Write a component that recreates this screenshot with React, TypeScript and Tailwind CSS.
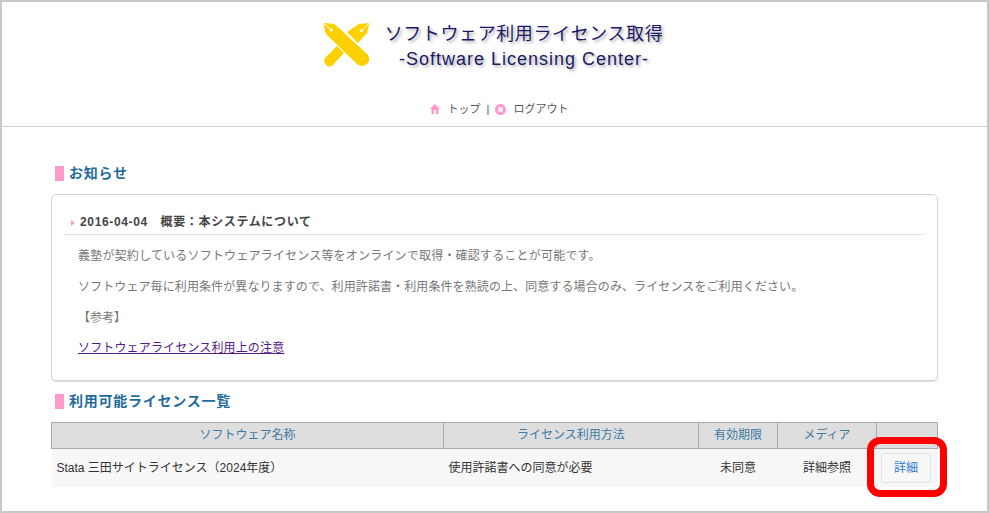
const jp = "font-['Liberation_Sans','Noto_Sans_CJK_JP',sans-serif]";

function Logo() {
  return (
    <svg width="46" height="46" viewBox="0 0 46 46" className="shrink-0">
      <g fill="#ffd000">
        <path d="M45.500 1 L35 2 L23 10 L34 21 L43 11 Z" />
        <path d="M13 24 L1 36 Q-1 40 2 43 Q6 46 9 43 L20 31 Z" />
        <path d="M0 1 L10 2 L15 6 L44 33 Q47 38 43 42 Q38 46 33 42 L3 13 L1 10 Z" />
      </g>
      <path d="M1 2 L7 8 M45 1.500 L38 8" stroke="#fff" strokeWidth="1" />
      <circle cx="7.500" cy="8" r="1.600" fill="#fff" />
      <circle cx="37.500" cy="8.500" r="1.600" fill="#fff" />
    </svg>
  );
}

function SectionTitle({ children }: { children: string }) {
  return (
    <h2 className="flex items-center gap-[5px] h-[15px] text-[14px] leading-[15px] font-bold tracking-[0.75px] text-[#1f6a9e]">
      <span className="w-[9px] h-[15px] bg-[#ff99cc]" />
      {children}
    </h2>
  );
}

export default function App() {
  return (
    <div className={`${jp} relative w-[989px] h-[513px] overflow-hidden bg-white border-2 border-[#c8c8c8] text-[#333]`}>
      <header className="h-[125px] border-b border-[#cfcfcf] flex flex-col items-center">
        <div className="flex items-start mt-[20px] ml-[-2px]">
          <Logo />
          <div className="ml-[15px] text-center text-[18px] leading-[25px] tracking-[0.6px] text-[#1c1a66] [text-shadow:2px_2px_3px_#aaa]">
            <div>ソフトウェア利用ライセンス取得</div>
            <div className="tracking-[1px]">-Software Licensing Center-</div>
          </div>
        </div>
        <nav className="flex items-center mt-[30px] text-[11px] leading-[14px] text-[#555] ml-[9px]">
          <svg width="10" height="10" viewBox="0 0 10 10" className="mr-[8px]">
            <path d="M5 0 L10 5 H8.500 V10 H1.500 V5 H0 Z" fill="#ff99cc" />
            <path d="M4 6 H6 V10 H4 Z" fill="#fff" />
          </svg>
          <span>トップ</span>
          <span className="mx-[6px]">|</span>
          <svg width="11" height="11" viewBox="0 0 11 11" className="mr-[7px]">
            <circle cx="5.500" cy="5.500" r="5.500" fill="#ff99cc" />
            <path d="M3.500 3.500 L7.500 7.500 M7.500 3.500 L3.500 7.500" stroke="#fff" strokeWidth="1.800" />
          </svg>
          <span>ログアウト</span>
        </nav>
      </header>

      <main className="pl-[49px] pr-[49px] pt-[39px]">
        <div className="ml-[4px]">
          <SectionTitle>お知らせ</SectionTitle>
        </div>
        <section className="mt-[13px] h-[187px] border border-[#d4d4d4] rounded-[5px] px-[13px] pt-[19px] shadow-[0_1px_1px_#ddd]">
          <h3 className="relative h-[21px] pl-[15px] text-[12px] leading-[16px] font-bold tracking-[0.65px] text-[#444] border-b border-dotted border-[#ccc]">
            <span className="absolute left-[6px] top-[6px] border-y-[3.500px] border-l-[4px] border-y-transparent border-l-[#ff99cc]" />
            2016-04-04　概要：本システムについて
          </h3>
          <div className="pl-[13px] text-[12px] leading-[16px] text-[#777]">
            <p className="mt-[13px] tracking-[0.2px]">義塾が契約しているソフトウェアライセンス等をオンラインで取得・確認することが可能です。</p>
            <p className="mt-[15px] tracking-[0.1px]">ソフトウェア毎に利用条件が異なりますので、利用許諾書・利用条件を熟読の上、同意する場合のみ、ライセンスをご利用ください。</p>
            <p className="mt-[15px]">【参考】</p>
            <p className="mt-[14px] tracking-[0.15px]">
              <a className="underline text-[#551a8b]">ソフトウェアライセンス利用上の注意</a>
            </p>
          </div>
        </section>

        <div className="mt-[13px] ml-[4px]">
          <SectionTitle>利用可能ライセンス一覧</SectionTitle>
        </div>

        <table className="mt-[13px] w-[887px] table-fixed border-collapse text-[12px]">
          <thead>
            <tr className="h-[26px] bg-[#dedede] text-[#3d7aa3]">
              <th className="w-[392px] font-normal border border-[#aaa] pb-[2px]">ソフトウェア名称</th>
              <th className="w-[255px] font-normal border border-[#aaa] pb-[2px]">ライセンス利用方法</th>
              <th className="w-[79px] font-normal border border-[#aaa] pb-[2px]">有効期限</th>
              <th className="w-[99px] font-normal border border-[#aaa] pb-[2px]">メディア</th>
              <th className="font-normal border border-[#aaa]" />
            </tr>
          </thead>
          <tbody>
            <tr className="h-[38px] bg-[#f7f7f7] text-[#333]">
              <td className="pl-[5px]">Stata 三田サイトライセンス（2024年度）</td>
              <td className="pl-[5px]">使用許諾書への同意が必要</td>
              <td className="text-center">未同意</td>
              <td className="text-center">詳細参照</td>
              <td className="pl-[4px]">
                <button className="block w-[50px] h-[30px] pl-[1px] rounded-[2px] border border-[#e2e2e2] bg-[#f7f7f7] text-[12px] text-[#2f7bd6]">詳細</button>
              </td>
            </tr>
          </tbody>
        </table>
      </main>

      <div className="absolute left-[865px] top-[435px] w-[80px] h-[60px] border-[7px] border-[#ff0000] rounded-[13px]" />
    </div>
  );
}
